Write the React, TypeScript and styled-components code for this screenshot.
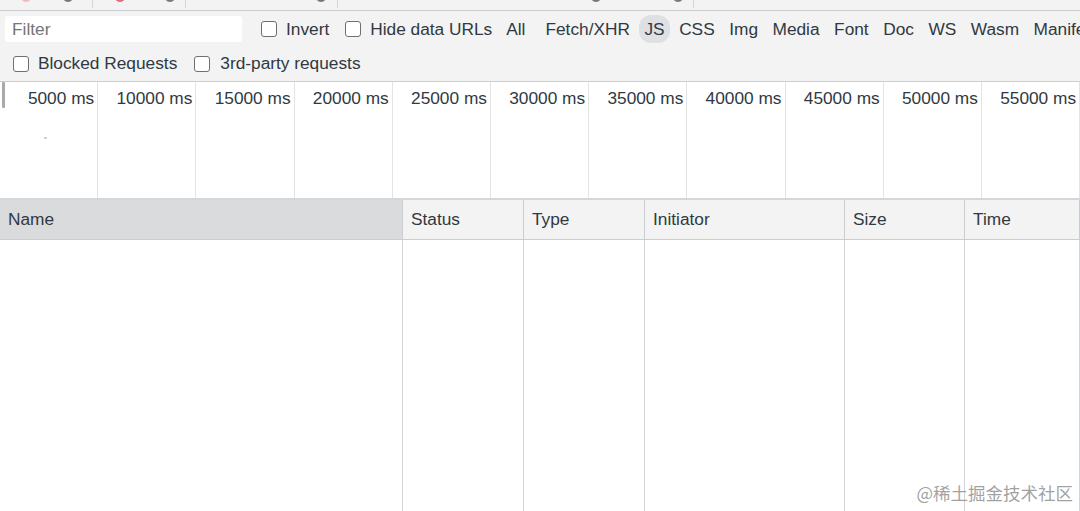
import styled, { createGlobalStyle } from "styled-components";

const GlobalStyle = createGlobalStyle`
  html, body {
    margin: 0;
    padding: 0;
    background: #ffffff;
  }
  * {
    box-sizing: border-box;
  }
`;

const types = ["Fetch/XHR", "JS", "CSS", "Img", "Media", "Font", "Doc", "WS", "Wasm", "Manifest"];
const ticks = [5000, 10000, 15000, 20000, 25000, 30000, 35000, 40000, 45000, 50000, 55000];
const columns = ["Name", "Status", "Type", "Initiator", "Size", "Time"];
const topIcons: { x: number; color: string; kind: "dot" | "sep" }[] = [
  { x: 20, color: "#f4b9c0", kind: "dot" },
  { x: 62, color: "#777", kind: "dot" },
  { x: 92, color: "#cfcfcf", kind: "sep" },
  { x: 114, color: "#e6667a", kind: "dot" },
  { x: 164, color: "#777", kind: "dot" },
  { x: 185, color: "#cfcfcf", kind: "sep" },
  { x: 315, color: "#777", kind: "dot" },
  { x: 337, color: "#cfcfcf", kind: "sep" },
  { x: 590, color: "#777", kind: "dot" },
  { x: 672, color: "#777", kind: "dot" },
  { x: 693, color: "#cfcfcf", kind: "sep" },
];

export default function App() {
  return (
    <>
      <GlobalStyle />
      <Panel>
        <TopBar>
          {topIcons.map((icon, i) =>
            icon.kind === "dot" ? (
              <TopDot key={i} style={{ left: icon.x, background: icon.color }} />
            ) : (
              <TopSep key={i} style={{ left: icon.x }} />
            )
          )}
        </TopBar>

        <FilterRow>
          <FilterInput placeholder="Filter" />
          <Option $gap={19}>
            <Check />
            <Label>Invert</Label>
          </Option>
          <Option $gap={16}>
            <Check />
            <Label>Hide data URLs</Label>
          </Option>
          <TypeButton $first>All</TypeButton>
          <Divider />
          <Types>
            {types.map((t) => (
              <TypeButton key={t} $active={t === "JS"}>
                {t}
              </TypeButton>
            ))}
          </Types>
        </FilterRow>

        <OptionsRow>
          <Option $gap={0}>
            <Check />
            <Label>Blocked Requests</Label>
          </Option>
          <Option $gap={17}>
            <Check />
            <Label $wide>3rd-party requests</Label>
          </Option>
        </OptionsRow>

        <Overview>
          <Handle />
          <Blip />
          {ticks.map((t) => (
            <Tick key={t}>{t} ms</Tick>
          ))}
        </Overview>

        <Table>
          <HeaderRow>
            {columns.map((c) => (
              <HeaderCell key={c} $sorted={c === "Name"}>
                {c}
              </HeaderCell>
            ))}
          </HeaderRow>
          <BodyRow>
            {columns.map((c) => (
              <BodyCell key={c} />
            ))}
          </BodyRow>
        </Table>

        <Watermark>@稀土掘金技术社区</Watermark>
      </Panel>
    </>
  );
}

const Panel = styled.div`
  position: relative;
  width: 100vw;
  height: 100vh;
  display: flex;
  flex-direction: column;
  overflow: hidden;
  font-family: "Liberation Sans", Arial, Helvetica, sans-serif;
  font-size: 17.3px;
  color: #303942;
  background: #ffffff;
`;

const TopBar = styled.div`
  position: relative;
  height: 11px;
  flex-shrink: 0;
  background: #f3f3f3;
  border-bottom: 1px solid #cbcdd1;
  overflow: hidden;
`;

const TopDot = styled.span`
  position: absolute;
  top: -12px;
  width: 12px;
  height: 14px;
  border-radius: 50%;
`;

const TopSep = styled.span`
  position: absolute;
  top: 0;
  width: 1px;
  height: 8px;
  background: #d6d6d6;
`;

const FilterRow = styled.div`
  height: 36px;
  flex-shrink: 0;
  display: flex;
  align-items: center;
  padding-left: 5px;
  background: #f3f3f3;
  white-space: nowrap;
`;

const FilterInput = styled.input`
  width: 238px;
  height: 26px;
  border: none;
  outline: none;
  border-radius: 3px;
  background: #ffffff;
  padding: 0 7px;
  font-family: inherit;
  font-size: 17.3px;
  color: #303942;

  &::placeholder {
    color: #757575;
  }
`;

const Option = styled.label<{ $gap: number }>`
  display: flex;
  align-items: center;
  margin-left: ${(p) => p.$gap}px;
`;

const Check = styled.span`
  width: 16px;
  height: 16px;
  border: 1.5px solid #6f6f6f;
  border-radius: 3px;
  background: #ffffff;
  flex-shrink: 0;
`;

const Label = styled.span<{ $wide?: boolean }>`
  margin-left: ${(p) => (p.$wide ? "10px" : "9px")};
  color: #303942;
`;

const Divider = styled.span`
  width: 1px;
  height: 20px;
  background: #cbcdd1;
  margin: 0 4px 0 6px;
`;

const Types = styled.div`
  display: flex;
  align-items: center;
  gap: 4.5px;
`;

const TypeButton = styled.span<{ $active?: boolean; $first?: boolean }>`
  height: 28px;
  display: flex;
  align-items: center;
  padding: 0 5px;
  margin-left: ${(p) => (p.$first ? "9px" : "0")};
  border-radius: 12px;
  background: ${(p) => (p.$active ? "#dfe0e3" : "transparent")};
  color: #303942;
`;

const OptionsRow = styled.div`
  height: 35px;
  flex-shrink: 0;
  display: flex;
  align-items: center;
  padding: 0 0 1px 13px;
  background: #f3f3f3;
  border-bottom: 1px solid #cbcdd1;
  white-space: nowrap;
`;

const Overview = styled.div`
  position: relative;
  height: 118px;
  flex-shrink: 0;
  display: flex;
  background: #ffffff;
  border-bottom: 2px solid #d6d7da;
`;

const Handle = styled.span`
  position: absolute;
  left: 2px;
  top: 0;
  width: 3px;
  height: 26px;
  background: #a9a9a9;
  border-radius: 1px;
`;

const Blip = styled.span`
  position: absolute;
  left: 44px;
  top: 55px;
  width: 3px;
  height: 2px;
  background: #cfcfcf;
`;

const Tick = styled.div`
  flex: 1;
  text-align: right;
  padding: 6px 3px 0 0;
  border-right: 1px solid #e3e3e3;
  color: #303942;
  white-space: nowrap;
`;

const Table = styled.div`
  flex: 1;
  display: flex;
  flex-direction: column;
`;

const grid = `
  display: grid;
  grid-template-columns: 403px 121px 121px 200px 120px 1fr;
`;

const HeaderRow = styled.div`
  ${grid}
  height: 40px;
  background: #f3f3f3;
  border-bottom: 1px solid #cbcdd1;
`;

const HeaderCell = styled.div<{ $sorted?: boolean }>`
  display: flex;
  align-items: center;
  padding-left: 8px;
  border-right: 1px solid #cbcdd1;
  background: ${(p) => (p.$sorted ? "#dadbdd" : "transparent")};
  color: #303942;
`;

const BodyRow = styled.div`
  ${grid}
  flex: 1;
`;

const BodyCell = styled.div`
  border-right: 1px solid #d3d4d6;
`;

const Watermark = styled.div`
  position: absolute;
  right: 7px;
  bottom: 6px;
  font-family: "Noto Sans CJK SC", "Liberation Sans", sans-serif;
  font-size: 17.5px;
  color: rgba(130, 130, 130, 0.75);
  white-space: nowrap;
`;
